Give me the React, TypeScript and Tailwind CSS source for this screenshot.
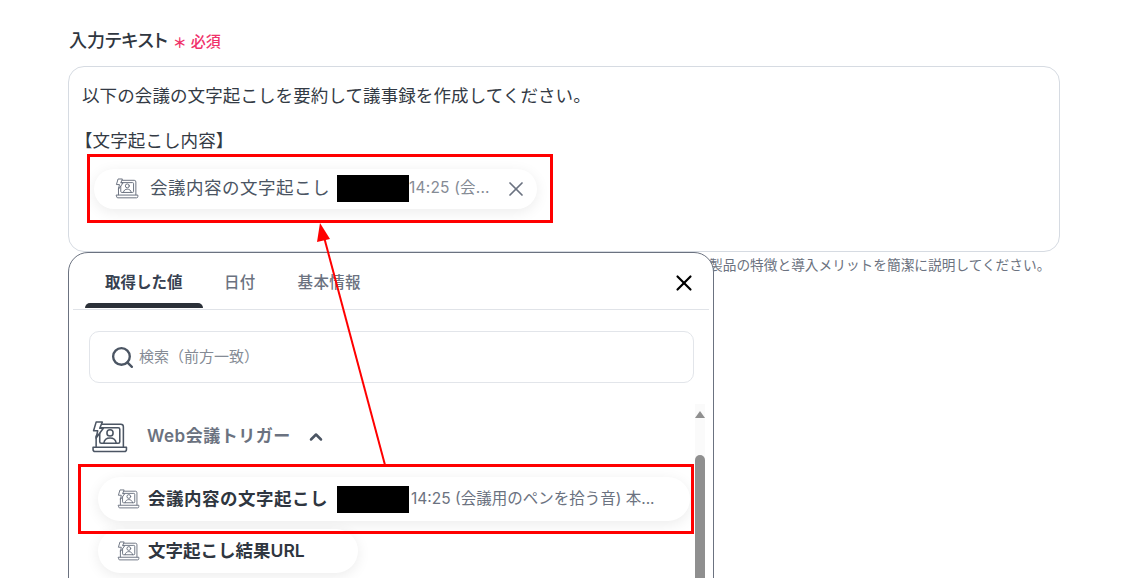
import { ChevronUp, Search, X } from 'lucide-react'

const font = 'font-["Inter","Noto_Sans_CJK_JP",sans-serif]'

function MeetingIcon({ className }: { className: string }) {
  return (
    <svg viewBox="0 0 36 32" fill="none" stroke="currentColor" strokeWidth="1.5" strokeLinejoin="round" strokeLinecap="round" className={className}>
      <path d="M11 3.5h18a2.5 2.5 0 0 1 2.5 2.5v19.5M5 25.5V15" />
      <rect x="8.5" y="7" width="19.5" height="15" rx="1.5" />
      <path d="M2 26h32.5v2.2a2 2 0 0 1-2 2H4a2 2 0 0 1-2-2z" />
      <path d="M5 1.5h6L8.5 7.5H12L5 17l1.5-7H2.5z" fill="white" />
      <circle cx="18.5" cy="12" r="3" />
      <path d="M12.5 22c.5-3.5 3-5 6-5s5.500 1.500 6 5" />
    </svg>
  )
}

function Tab({ label, active }: { label: string; active?: boolean }) {
  return (
    <div className={active ? 'relative w-[118px] pl-[20px] text-[15.500px] font-semibold text-[#374151]' : 'text-[15.500px] tracking-[0.3px] font-medium text-[#6b7280]'}>
      {label}
      {active && <div className="absolute left-0 right-0 top-[32px] h-[5px] rounded-t-[5px] bg-[#2b3038]" />}
    </div>
  )
}

export default function App() {
  return (
    <div className={`${font} relative h-[578px] w-[1129px] overflow-hidden bg-white pl-[68px] pt-[26px] text-[#374151]`}>
      <div className="flex h-[30px] items-center">
        <span className="-mt-[2px] pl-[1px] text-[18px] font-medium text-[#2f3640] [font-feature-settings:'palt']">入力テキスト</span>
        <span className="ml-[5px] mt-[4px] text-[14px] leading-none font-semibold text-[#f0336a]">＊</span>
        <span className="ml-[4px] mt-[2px] text-[15px] font-medium text-[#f0336a]">必須</span>
      </div>

      <div className="mt-[10px] h-[186px] w-[992px] rounded-[16px] border border-[#d6dbe2] px-[13px] pt-[18px] text-[17.500px] tracking-[0.1px] leading-[22.500px] text-[#333a44]">
        <p>以下の会議の文字起こしを要約して議事録を作成してください。</p>
        <p className="mt-[22.500px] -ml-[7px]">【文字起こし内容】</p>
        <div className="ml-[12px] mt-[16px] flex h-[40px] w-[443px] items-center rounded-full bg-white pl-[21px] pr-[9px] shadow-[0_3px_14px_rgba(0,0,0,0.08)]">
          <MeetingIcon className="h-[21px] w-[24px] shrink-0 text-[#6b7280]" />
          <span className="ml-[11px] w-[187px] shrink-0 text-[#4b5563] tracking-[0.5px]">会議内容の文字起こし</span>
          <div className="h-[27px] w-[72px] shrink-0 bg-black" />
          <span className="w-[90px] truncate text-[15.500px] tracking-[0.2px] text-[#858b95]">14:25 (会...</span>
          <X className="ml-auto h-[24px] w-[24px] text-[#6b7280]" strokeWidth={1.75} />
        </div>
      </div>

      <p className="mt-[3px] ml-[641px] text-[13.700px] text-[#6b7280]">製品の特徴と導入メリットを簡潔に説明してください。</p>

      {/* variable picker */}
      <div className="absolute left-[68px] top-[252px] h-[400px] w-[646px] rounded-t-[20px] border border-[#6b7280] bg-white">
        <div className="mx-[4px] flex h-[57px] items-center border-b border-[#e0e3e8] pl-[12px] pt-[4px]">
          <Tab label="取得した値" active />
          <div className="ml-[21px]"><Tab label="日付" /></div>
          <div className="ml-[42px]"><Tab label="基本情報" /></div>
          <X className="ml-auto mr-[12px] h-[26px] w-[26px] text-black" strokeWidth={2} />
        </div>

        <div className="mx-[20px] mt-[21px] flex h-[52px] w-[605px] items-center rounded-[10px] border border-[#e2e5ea] pl-[20px]">
          <Search className="h-[25px] w-[25px] text-[#4b5563]" strokeWidth={2.25} />
          <span className="ml-[4px] text-[15px] text-[#858b95]">検索（前方一致）</span>
        </div>

        <div className="relative mt-[21px] h-[300px]">
          {/* scrollbar */}
          <div className="absolute right-[8px] top-0 h-full w-[10px] bg-[#fafafa]">
            <div className="mx-auto mt-[7px] h-0 w-0 border-x-[5px] border-b-[7px] border-x-transparent border-b-[#8f8f8f]" />
            <div className="mt-[37px] h-[200px] w-[10px] rounded-full bg-[#8f8f8f]" />
          </div>

          <div className="ml-[22px] flex h-[60px] items-center pt-[5px]">
            <MeetingIcon className="h-[34px] w-[37px] text-[#4b5563]" />
            <span className="ml-[19px] text-[17px] tracking-[0.5px] font-semibold text-[#6b7280]">Web会議トリガー</span>
            <ChevronUp className="ml-[15px] h-[20px] w-[20px] text-[#4b5563]" strokeWidth={3} />
          </div>

          <div className="ml-[29px] mt-[13px] flex h-[44px] w-[592px] items-center rounded-full bg-white pl-[19px] shadow-[0_3px_14px_rgba(0,0,0,0.08)]">
            <MeetingIcon className="h-[20px] w-[23px] shrink-0 text-[#6b7280]" />
            <span className="ml-[8px] w-[189px] shrink-0 text-[17.500px] tracking-[0.5px] font-semibold text-[#2f3640]">会議内容の文字起こし</span>
            <div className="h-[27px] w-[72px] shrink-0 bg-black" />
            <span className="ml-[2px] text-[15.500px] text-[#6b7280]">14:25 (会議用のペンを拾う音) 本...</span>
          </div>

          <div className="ml-[29px] mt-[8px] flex h-[44px] w-[260px] items-center rounded-full bg-white pl-[19px] shadow-[0_3px_14px_rgba(0,0,0,0.08)]">
            <MeetingIcon className="h-[20px] w-[23px] shrink-0 text-[#6b7280]" />
            <span className="ml-[8px] text-[17.500px] font-semibold text-[#2f3640]">文字起こし結果URL</span>
          </div>
        </div>
      </div>

      {/* annotations added on top of the screenshot */}
      <div className="absolute left-[87px] top-[154px] h-[69px] w-[466px] border-[3px] border-[#ff0000]" />
      <div className="absolute left-[78px] top-[464px] h-[70px] w-[616px] border-[3px] border-[#ff0000]" />
      <svg className="absolute left-[300px] top-[215px] h-[255px] w-[100px]" viewBox="0 0 100 255" fill="none">
        <path d="M85 250 24 22" stroke="#ff0000" strokeWidth="2" />
        <path d="M20 8 30 24 17 27z" fill="#ff0000" />
      </svg>
    </div>
  )
}
